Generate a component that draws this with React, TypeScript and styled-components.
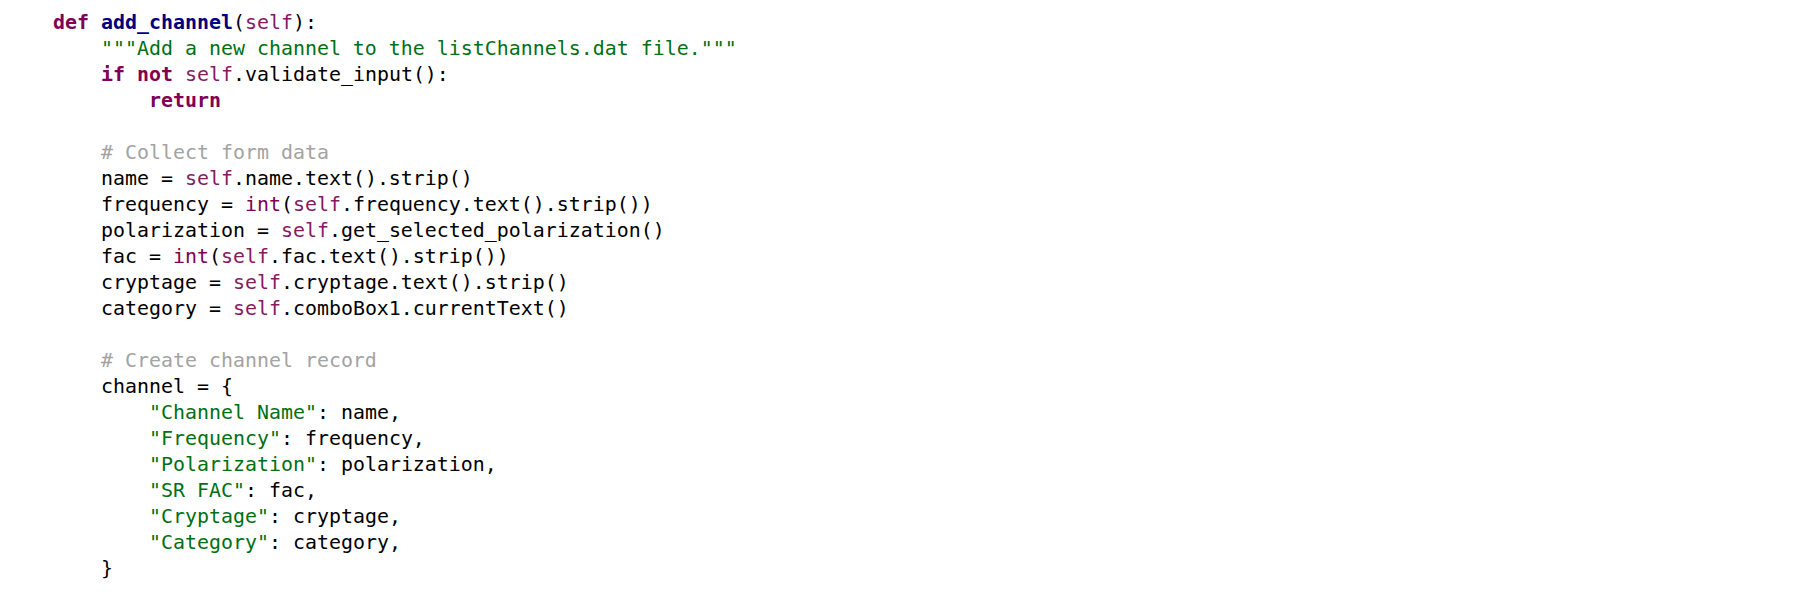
import React from "react";
import styled, { createGlobalStyle } from "styled-components";

const GlobalStyle = createGlobalStyle`
  html, body {
    margin: 0;
    padding: 0;
    background: #ffffff;
  }
`;

const Editor = styled.div`
  width: 1802px;
  height: 598px;
  box-sizing: border-box;
  padding: 10px 0 0 53px;
  background: #ffffff;
  overflow: hidden;
`;

const Code = styled.div`
  display: flex;
  flex-direction: column;
  font-family: "DejaVu Sans Mono", "Liberation Mono", monospace;
  font-size: 19.93px;
  line-height: 26px;
  color: #000000;
  white-space: pre;
`;

const Line = styled.div<{ $indent: number }>`
  height: 26px;
  padding-left: ${(p) => p.$indent * 12}px;
`;

const Kw = styled.span`
  color: #7f0055;
  font-weight: bold;
`;

const Builtin = styled.span`
  color: #7f0055;
`;

const Self = styled.span`
  color: #841b63;
`;

const Fn = styled.span`
  color: #000080;
  font-weight: bold;
`;

const Str = styled.span`
  color: #007014;
`;

const Cm = styled.span`
  color: #a3a3a3;
`;

export default function App() {
  return (
    <>
      <GlobalStyle />
      <Editor>
        <Code>
          <Line $indent={0}>
            <Kw>def</Kw> <Fn>add_channel</Fn>(<Self>self</Self>):
          </Line>
          <Line $indent={4}>
            <Str>"""Add a new channel to the listChannels.dat file."""</Str>
          </Line>
          <Line $indent={4}>
            <Kw>if</Kw> <Kw>not</Kw> <Self>self</Self>.validate_input():
          </Line>
          <Line $indent={8}>
            <Kw>return</Kw>
          </Line>
          <Line $indent={0} />
          <Line $indent={4}>
            <Cm># Collect form data</Cm>
          </Line>
          <Line $indent={4}>
            name = <Self>self</Self>.name.text().strip()
          </Line>
          <Line $indent={4}>
            frequency = <Builtin>int</Builtin>(<Self>self</Self>.frequency.text().strip())
          </Line>
          <Line $indent={4}>
            polarization = <Self>self</Self>.get_selected_polarization()
          </Line>
          <Line $indent={4}>
            fac = <Builtin>int</Builtin>(<Self>self</Self>.fac.text().strip())
          </Line>
          <Line $indent={4}>
            cryptage = <Self>self</Self>.cryptage.text().strip()
          </Line>
          <Line $indent={4}>
            category = <Self>self</Self>.comboBox1.currentText()
          </Line>
          <Line $indent={0} />
          <Line $indent={4}>
            <Cm># Create channel record</Cm>
          </Line>
          <Line $indent={4}>channel = {"{"}</Line>
          <Line $indent={8}>
            <Str>"Channel Name"</Str>: name,
          </Line>
          <Line $indent={8}>
            <Str>"Frequency"</Str>: frequency,
          </Line>
          <Line $indent={8}>
            <Str>"Polarization"</Str>: polarization,
          </Line>
          <Line $indent={8}>
            <Str>"SR FAC"</Str>: fac,
          </Line>
          <Line $indent={8}>
            <Str>"Cryptage"</Str>: cryptage,
          </Line>
          <Line $indent={8}>
            <Str>"Category"</Str>: category,
          </Line>
          <Line $indent={4}>{"}"}</Line>
        </Code>
      </Editor>
    </>
  );
}
